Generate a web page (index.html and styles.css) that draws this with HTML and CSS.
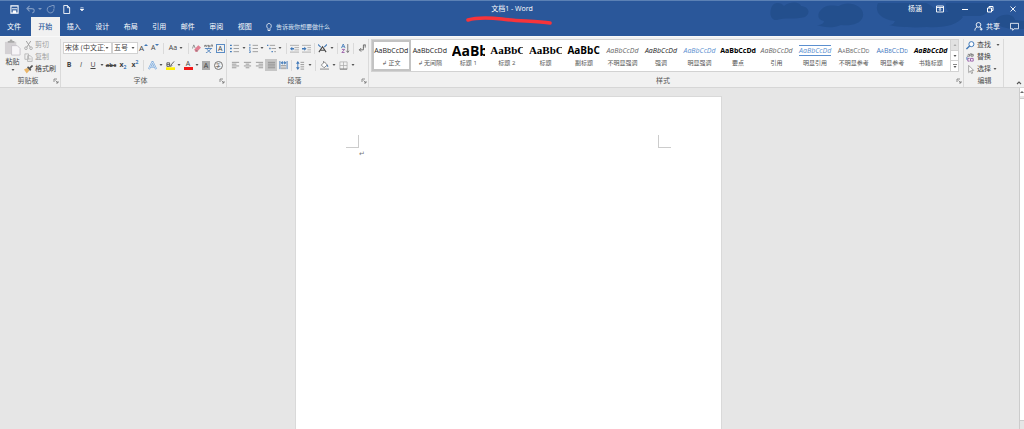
FILE: index.html
```html
<!DOCTYPE html>
<html lang="zh-CN">
<head>
<meta charset="utf-8">
<title>文档1 - Word</title>
<link rel="stylesheet" href="styles.css">
</head>
<body>
<svg class="defs" aria-hidden="true">
  <symbol id="caret" viewBox="0 0 4 4"><path d="M.5 1h3L2 3z" fill="#555"/></symbol>
  <symbol id="launch" viewBox="0 0 6 6"><path d="M1 4V1h3M2.500 2.500 5 5M5 3v2H3" fill="none" stroke="#777" stroke-width=".8"/></symbol>
  <symbol id="list" viewBox="0 0 10 10"><path d="M0 1.500h2M0 5h2M0 8.500h2" stroke="#3f78b8" stroke-width="1.600"/><path d="M4 1.500h6M4 5h6M4 8.500h6" stroke="#999"/></symbol>
  <symbol id="numlist" viewBox="0 0 10 10"><path d="M1 0v2.500M0 4h1.500L.5 6h1M0 7.500h1.500v2H0" stroke="#3f78b8" stroke-width=".8" fill="none"/><path d="M4 1.500h6M4 5h6M4 8.500h6" stroke="#999"/></symbol>
  <symbol id="multilist" viewBox="0 0 10 10"><path d="M0 1.500h1.500M2.500 5H4M5 8.500h1.500" stroke="#3f78b8" stroke-width="1.600"/><path d="M3 1.500h6M5 5h5M8 8.500h2" stroke="#999"/></symbol>
  <symbol id="outdent" viewBox="0 0 10 10"><path d="M0 1.500h10M5 4h5M5 6.500h5M0 9h10" stroke="#999" stroke-width=".8"/><path d="M0 5.200 2.500 3v1.500H4.500v1.500h-2v1.500z" fill="#3f78b8"/></symbol>
  <symbol id="indent" viewBox="0 0 10 10"><path d="M0 1.500h10M6 4h4M6 6.500h4M0 9h10" stroke="#999" stroke-width=".8"/><path d="M5 5.200 2.500 3v1.500H0v1.500h2.500v1.500z" fill="#3f78b8"/></symbol>
  <symbol id="left" viewBox="0 0 10 10"><path d="M1 1.500h8M1 3.500h5M1 5.500h8M1 7.500h5" stroke="#888" stroke-width=".9"/></symbol>
  <symbol id="center" viewBox="0 0 10 10"><path d="M1 1.500h8M3 3.500h4M1 5.500h8M3 7.500h4" stroke="#888" stroke-width=".9"/></symbol>
  <symbol id="right" viewBox="0 0 10 10"><path d="M1 1.500h8M4 3.500h5M1 5.500h8M4 7.500h5" stroke="#888" stroke-width=".9"/></symbol>
  <symbol id="justify" viewBox="0 0 10 10"><path d="M1 1.500h8M1 3.500h8M1 5.500h8M1 7.500h8" stroke="#888" stroke-width=".9"/></symbol>
  <symbol id="distribute" viewBox="0 0 10 10"><path d="M1 0v9M9 0v9" stroke="#3f78b8"/><path d="M2 2 4 .5v3zM8 2 6 .5v3zM3 2h4" fill="#3f78b8" stroke="#3f78b8" stroke-width=".6"/><path d="M2 5h6M2 6.800h6M2 8.500h6" stroke="#888" stroke-width=".8"/></symbol>
  <symbol id="spacing" viewBox="0 0 10 10"><path d="M2 1v8" stroke="#3f78b8"/><path d="M2 0 4 3H0zM2 10 4 7H0z" fill="#3f78b8"/><path d="M5 1.500h4M5 4h4M5 6.500h4M5 9h4" stroke="#888" stroke-width=".9"/></symbol>
  <symbol id="bucket" viewBox="0 0 10 10"><path d="M1.500 4.500 5 1l3 3.500-3.500 3zM4 2V0" fill="#fff" stroke="#666" stroke-width=".8"/><path d="M8 4c1 1 1.500 2 1 3L7.500 5.500z" fill="#3f78b8"/><path d="M0 9h10" stroke="#aaa" stroke-width="1.600"/></symbol>
  <symbol id="border" viewBox="0 0 10 10"><path d="M1 1h8v8H1zM5 1v8M1 5h8" fill="none" stroke="#aaa" stroke-width=".8"/><path d="M1 9h8" stroke="#777"/></symbol>
  <symbol id="asian" viewBox="0 0 10 10"><path d="M0 .5 3 3.500M10 .5 7 3.500" fill="none" stroke="#3f78b8" stroke-width="1.200"/><path d="m1 9 4-6 4 6M3 7h4" fill="none" stroke="#444" stroke-width="1.200"/></symbol>
  <symbol id="sort" viewBox="0 0 10 10"><path d="M.5 4.500 2.500 0l2 4.500M1.300 3h2.500" fill="none" stroke="#3f78b8" stroke-width=".9"/><path d="M1 6h3L1 9.500h3" fill="none" stroke="#8d4a9e" stroke-width=".9"/><path d="M7.500 0v9M6 7.500 7.500 9.500 9 7.500" fill="none" stroke="#666" stroke-width=".9"/></symbol>
  <symbol id="marks" viewBox="0 0 10 10"><path d="M8.500 1H6v3.500M8 1v3M1.500 6.500H6V4M3.500 4.500l-2 2 2 2" fill="none" stroke="#555" stroke-width=".9"/></symbol>
  <symbol id="eraser" viewBox="0 0 10 10"><path d="m2.500 6 4.500-4.500 3 2.500-4.500 5H4z" fill="#e27f92"/><path d="M.5 5 2 1l1.500 3.500M4 7l2.500 1" fill="none" stroke="#777" stroke-width=".8"/></symbol>
  <symbol id="phonetic" viewBox="0 0 10 10"><path d="M0 1l1 2 1-2 1 2 1-2M5 2h2M5 1v2h2M8 3V1h1.500v2" fill="none" stroke="#555" stroke-width=".7"/><path d="M1 5h8M5 4v1M3 5c1 2 3 4 5 5M7.500 5C7 7 4 9 2 10" fill="none" stroke="#3f78b8" stroke-width=".9"/></symbol>
  <symbol id="marker" viewBox="0 0 10 10"><path d="M0 7h10v3H0z" fill="#ffef00"/><path d="M1 2h3v4H1zM1 4h3M5 5l4-4.500M4.500 6 7 5" fill="none" stroke="#555" stroke-width="1"/></symbol>
  <symbol id="paste" viewBox="0 0 18 18"><path d="M1 3h12v13H1z" fill="#d4d1d4"/><path d="M4 4V2h2c0-2 3-2 3 0h2v2z" fill="#aaa"/><path d="M8 7h6l3 3v7H8z" fill="#f7f5f8" stroke="#c8c3ca"/></symbol>
  <symbol id="cut" viewBox="0 0 10 10"><path d="M2.500 0 7 7M7.500 0 3 7" stroke="#999"/><g fill="none" stroke="#aaa"><circle cx="2.200" cy="8" r="1.500"/><circle cx="7.800" cy="8" r="1.500"/></g></symbol>
  <symbol id="copy" viewBox="0 0 10 10"><path d="M1 1h4v6H1zM4 3h3l2 2v4.500H4z" fill="#f1f1f1" stroke="#b5b5b5"/><path d="M5.500 6h2M5.500 7.500h2" stroke="#b5b5b5" stroke-width=".6"/></symbol>
  <symbol id="brush" viewBox="0 0 10 10"><path d="m0 5 4-2 2 3-3 3.500z" fill="#eab66a"/><path d="m4 2 3.500 4" stroke="#555" stroke-width="1.800"/><path d="M6 4 9.500.5" stroke="#555" stroke-width="1.800"/></symbol>
  <symbol id="find" viewBox="0 0 10 10"><circle cx="6" cy="3.500" r="2.800" fill="#fff" stroke="#3f78b8" stroke-width="1.100"/><path d="M4 5.500.5 9" stroke="#3f78b8" stroke-width="1.600"/></symbol>
  <symbol id="replace" viewBox="0 0 10 10"><path d="M1 3.500h3V1.500H2M5.500 0v3.500H8V1.500H5.500" fill="none" stroke="#666" stroke-width=".9"/><path d="M5 6v3h3V6H5M4 6H2v3h2" fill="none" stroke="#8d4a9e" stroke-width=".9"/><path d="M1 4.500v3" stroke="#3f78b8"/></symbol>
  <symbol id="pointer" viewBox="0 0 10 10"><path d="M3 .5v8l2-2 1.200 3 1.200-.5L6.200 6H8.500z" fill="#fff" stroke="#777" stroke-width=".7"/></symbol>
</svg>

<header class="top">
  <svg class="clouds" viewBox="0 0 254 28" aria-hidden="true"><g fill="#1f4a85" opacity=".6">
    <path d="M1 8C2 1 10 0 14 5c7-5 16-4 17 0 8 1 10 7 4 11-10 3-22 0-28 3C2 20-1 14 1 8z"/>
    <path d="M50 10c6-8 15-5 19-5 8-6 26-1 24 10-2 9-14 10-22 9-9 4-19 2-24 0 5 0 7-2 7-4-6-1-7-6-4-10z"/>
    <path d="M108 2h48c8 3 8 8 18 9 7 0 15 1 19 5-6 8-18 11-36 10-14 1-30 0-38-2 4 0 5-2 6-4-18-2-20-12-17-18zM176 2h43c3 6-2 12-9 13h-24c-8-2-11-8-10-13zM227 17c6-5 17-4 18 2l9 1v8c-9 1-20-1-24-3-5-1-6-5-3-8z"/>
  </g></svg>
  <div class="titlebar">
    <div class="quick">
      <button aria-label="保存"><svg class="i9" viewBox="0 0 10 10"><path d="M1 1h8v8H1z" fill="none" stroke="#fff" stroke-width="1.200"/><path d="M2 4.200h6" stroke="#fff"/><path d="M3 6h4v3H3z" fill="#fff"/></svg></button>
      <button class="dim" aria-label="撤消"><svg class="i9" viewBox="0 0 10 10"><path d="M4 1 1 4l3 3M1 4h5c4 0 4 4 1 5" fill="none" stroke="#fff" stroke-width="1.200"/></svg></button>
      <button class="dim narrow" aria-label="撤消选项"><svg class="i4" viewBox="0 0 4 4"><path d="M0 1h4L2 3z" fill="#fff"/></svg></button>
      <button class="dim" aria-label="重复"><svg class="i9" viewBox="0 0 10 10"><path d="M6 1.500a3.700 3.700 0 1 0 2.700 3M6 .5h3V4" fill="none" stroke="#fff" stroke-width="1.100"/></svg></button>
      <button aria-label="新建"><svg class="i9" viewBox="0 0 10 10"><path d="M2 .5h4L8.500 3v6.500H2zM6 .5V3h2.500" fill="none" stroke="#fff"/></svg></button>
      <button aria-label="自定义快速访问工具栏"><svg class="i4" viewBox="0 0 4 4"><path d="M.5.5h3M0 2h4L2 4z" fill="#fff" stroke="#fff" stroke-width=".5"/></svg></button>
    </div>
    <h1 class="title">文档1 - Word
      <svg class="scribble" viewBox="0 0 90 10" aria-hidden="true"><path d="M3 4c10-3 24-2 34-1 14 2 35 2 48 4" fill="none" stroke="#f8343a" stroke-width="3.600" stroke-linecap="round"/></svg>
    </h1>
    <div class="window">
      <button class="user">杨涵</button>
      <button aria-label="功能区显示选项"><svg class="i8" viewBox="0 0 8 8"><path d="M.5 1h7v6h-7zM.5 2.500h7M4 6V3.500M3 4.500l1-1 1 1" fill="none" stroke="#fff" stroke-width=".9"/></svg></button>
      <button aria-label="最小化"><svg class="i8" viewBox="0 0 8 8"><path d="M1 4.500h6" stroke="#fff"/></svg></button>
      <button aria-label="还原"><svg class="i8" viewBox="0 0 8 8"><path d="M1.500 3h4v4h-4zM3 3V1.500h4v4H5.500" fill="none" stroke="#fff"/></svg></button>
      <button aria-label="关闭"><svg class="i8" viewBox="0 0 8 8"><path d="m1.500 1.500 5 5M6.500 1.500l-5 5" stroke="#fff" stroke-width=".9"/></svg></button>
    </div>
  </div>
  <div class="tabbar">
    <button class="file">文件</button>
    <nav class="tabs">
      <button class="active">开始</button><button>插入</button><button>设计</button><button>布局</button><button>引用</button><button>邮件</button><button>审阅</button><button>视图</button>
    </nav>
    <label class="tell"><svg class="i8" viewBox="0 0 8 8"><path d="M3 5.500C1 4 1.500.5 4 .5S7 4 5 5.500V7.500H3z" fill="none" stroke="#fff" stroke-width=".8"/></svg>
      <input type="text" aria-label="操作说明搜索" placeholder="告诉我你想要做什么"></label>
    <button class="share"><svg class="i9" viewBox="0 0 10 10"><circle cx="5" cy="3.200" r="2.600" fill="none" stroke="#fff"/><path d="M1 9.500c0-2 1-3.500 2.500-4M6.500 5.500 8 7M6.500 8h3M8 6.500v3" fill="none" stroke="#fff"/></svg>共享</button>
    <button class="comment" aria-label="批注"><svg class="i9" viewBox="0 0 10 10"><path d="M.5 1.500h9v6h-5L3 9.300V7.500H.5z" fill="none" stroke="#fff" stroke-width=".9"/></svg></button>
  </div>
</header>

<main class="ribbon">
  <section class="group clipboard">
    <div class="body">
      <button class="paste"><svg class="i18"><use href="#paste"/></svg>粘贴<svg class="i4"><use href="#caret"/></svg></button>
      <div class="stack">
        <button class="faint"><svg class="i9"><use href="#cut"/></svg>剪切</button>
        <button class="faint"><svg class="i9"><use href="#copy"/></svg>复制</button>
        <button><svg class="i9"><use href="#brush"/></svg>格式刷</button>
      </div>
    </div>
    <footer><span>剪贴板</span><button aria-label="剪贴板选项"><svg class="i6"><use href="#launch"/></svg></button></footer>
  </section>

  <section class="group font">
    <div class="body rows">
      <div class="row">
        <label class="combo name"><select aria-label="字体"><option>宋体 (中文正文)</option></select><svg class="i4"><use href="#caret"/></svg></label>
        <label class="combo size"><select aria-label="字号"><option>五号</option></select><svg class="i4"><use href="#caret"/></svg></label>
        <button class="tool big" aria-label="增大字号">A<svg class="i4 raise" viewBox="0 0 4 4"><path d="M0 3h4L2 1z" fill="#3f78b8"/></svg></button>
        <button class="tool" aria-label="减小字号">A<svg class="i4 raise" viewBox="0 0 4 4"><path d="M0 1h4L2 3z" fill="#3f78b8"/></svg></button>
        <i class="sep"></i>
        <button class="tool case">Aa<svg class="i4"><use href="#caret"/></svg></button>
        <i class="sep"></i>
        <button class="tool" aria-label="清除格式"><svg class="i9"><use href="#eraser"/></svg></button>
        <button class="tool" aria-label="拼音指南"><svg class="i9"><use href="#phonetic"/></svg></button>
        <button class="tool"><span class="boxed">A</span></button>
      </div>
      <div class="row">
        <button class="tool"><b>B</b></button>
        <button class="tool"><em>I</em></button>
        <button class="tool"><u>U</u></button>
        <button class="drop" aria-label="下划线选项"><svg class="i4"><use href="#caret"/></svg></button>
        <button class="tool strike"><s>abc</s></button>
        <button class="tool"><b>x<sub>2</sub></b></button>
        <button class="tool"><b>x<sup>2</sup></b></button>
        <i class="sep"></i>
        <button class="tool" aria-label="文本效果"><svg class="i9" viewBox="0 0 10 10"><path d="m1 9 4-8 4 8M3 6.500h4" fill="none" stroke="#6da0d8" stroke-width="2.200"/><path d="m1 9 4-8 4 8M3 6.500h4" fill="none" stroke="#fff" stroke-width=".8"/></svg></button>
        <button class="drop" aria-label="文本效果选项"><svg class="i4"><use href="#caret"/></svg></button>
        <button class="tool" aria-label="突出显示"><svg class="i9"><use href="#marker"/></svg></button>
        <button class="drop" aria-label="突出显示选项"><svg class="i4"><use href="#caret"/></svg></button>
        <button class="tool"><span class="red">A</span></button>
        <button class="drop" aria-label="字体颜色选项"><svg class="i4"><use href="#caret"/></svg></button>
        <button class="tool"><span class="shaded">A</span></button>
        <button class="tool"><span class="ring">字</span></button>
      </div>
    </div>
    <footer><span>字体</span><button aria-label="字体选项"><svg class="i6"><use href="#launch"/></svg></button></footer>
  </section>

  <section class="group para">
    <div class="body rows">
      <div class="row">
        <button class="tool" aria-label="项目符号"><svg class="i9"><use href="#list"/></svg></button>
        <button class="drop" aria-label="项目符号选项"><svg class="i4"><use href="#caret"/></svg></button>
        <button class="tool" aria-label="编号"><svg class="i9"><use href="#numlist"/></svg></button>
        <button class="drop" aria-label="编号选项"><svg class="i4"><use href="#caret"/></svg></button>
        <button class="tool" aria-label="多级列表"><svg class="i9"><use href="#multilist"/></svg></button>
        <button class="drop" aria-label="多级列表选项"><svg class="i4"><use href="#caret"/></svg></button>
        <i class="sep"></i>
        <button class="tool" aria-label="减少缩进量"><svg class="i9"><use href="#outdent"/></svg></button>
        <button class="tool" aria-label="增加缩进量"><svg class="i9"><use href="#indent"/></svg></button>
        <i class="sep"></i>
        <button class="tool" aria-label="中文版式"><svg class="i9"><use href="#asian"/></svg></button>
        <button class="drop" aria-label="中文版式选项"><svg class="i4"><use href="#caret"/></svg></button>
        <i class="sep"></i>
        <button class="tool" aria-label="排序"><svg class="i9"><use href="#sort"/></svg></button>
        <i class="sep"></i>
        <button class="tool" aria-label="显示编辑标记"><svg class="i9"><use href="#marks"/></svg></button>
      </div>
      <div class="row">
        <button class="tool" aria-label="左对齐"><svg class="i9"><use href="#left"/></svg></button>
        <button class="tool" aria-label="居中"><svg class="i9"><use href="#center"/></svg></button>
        <button class="tool" aria-label="右对齐"><svg class="i9"><use href="#right"/></svg></button>
        <button class="tool on" aria-label="两端对齐"><svg class="i9"><use href="#justify"/></svg></button>
        <button class="tool" aria-label="分散对齐"><svg class="i9"><use href="#distribute"/></svg></button>
        <i class="sep"></i>
        <button class="tool" aria-label="行距"><svg class="i9"><use href="#spacing"/></svg></button>
        <button class="drop" aria-label="行距选项"><svg class="i4"><use href="#caret"/></svg></button>
        <i class="sep"></i>
        <button class="tool" aria-label="底纹"><svg class="i9"><use href="#bucket"/></svg></button>
        <button class="drop" aria-label="底纹选项"><svg class="i4"><use href="#caret"/></svg></button>
        <button class="tool" aria-label="边框"><svg class="i9"><use href="#border"/></svg></button>
        <button class="drop" aria-label="边框选项"><svg class="i4"><use href="#caret"/></svg></button>
      </div>
    </div>
    <footer><span>段落</span><button aria-label="段落选项"><svg class="i6"><use href="#launch"/></svg></button></footer>
  </section>

  <section class="group styles">
    <div class="body">
      <div class="gallery">
        <button class="chosen"><span class="sample">AaBbCcDd</span><span class="label">↲ 正文</span></button>
        <button><span class="sample">AaBbCcDd</span><span class="label">↲ 无间隔</span></button>
        <button><span class="sample h1">AaBb</span><span class="label">标题 1</span></button>
        <button><span class="sample h2">AaBbC</span><span class="label">标题 2</span></button>
        <button><span class="sample h2">AaBbC</span><span class="label">标题</span></button>
        <button><span class="sample h3">AaBbC</span><span class="label">副标题</span></button>
        <button><span class="sample it gray">AaBbCcDd</span><span class="label">不明显强调</span></button>
        <button><span class="sample it">AaBbCcDd</span><span class="label">强调</span></button>
        <button><span class="sample it blue">AaBbCcDd</span><span class="label">明显强调</span></button>
        <button><span class="sample bold">AaBbCcDd</span><span class="label">要点</span></button>
        <button><span class="sample it gray">AaBbCcDd</span><span class="label">引用</span></button>
        <button><span class="sample it blue ruled">AaBbCcDd</span><span class="label">明显引用</span></button>
        <button><span class="sample caps gray">AaBbCcDd</span><span class="label">不明显参考</span></button>
        <button><span class="sample caps strong">AaBbCcDd</span><span class="label">明显参考</span></button>
        <button><span class="sample it bold">AaBbCcDd</span><span class="label">书籍标题</span></button>
      </div>
      <div class="scroller">
        <button class="off" aria-label="上一行"><svg class="i4" viewBox="0 0 4 4"><path d="M.5 3h3L2 1z" fill="#aaa"/></svg></button>
        <button aria-label="下一行"><svg class="i4"><use href="#caret"/></svg></button>
        <button aria-label="其他样式"><svg class="i4" viewBox="0 0 4 4"><path d="M0 .5h4" stroke="#555" stroke-width=".7"/><path d="M.5 2h3L2 4z" fill="#555"/></svg></button>
      </div>
    </div>
    <footer><span>样式</span><button aria-label="样式选项"><svg class="i6"><use href="#launch"/></svg></button></footer>
  </section>

  <section class="group edit">
    <div class="body stack">
      <button><svg class="i9"><use href="#find"/></svg>查找<svg class="i4 far"><use href="#caret"/></svg></button>
      <button><svg class="i9"><use href="#replace"/></svg>替换</button>
      <button><svg class="i9"><use href="#pointer"/></svg>选择<svg class="i4"><use href="#caret"/></svg></button>
    </div>
    <footer><span>编辑</span></footer>
  </section>
  <button class="collapse" aria-label="折叠功能区"><svg class="i6" viewBox="0 0 6 6"><path d="m1 4 2-2 2 2" fill="none" stroke="#555" stroke-width="1.100"/></svg></button>
</main>

<div class="workspace">
  <div class="canvas">
    <article class="page">
      <div class="margins"><i class="mark start"></i><i class="mark end"></i></div>
      <p>↵</p>
    </article>
  </div>
  <div class="scrollbar"><button aria-label="向上滚动"><svg class="i4" viewBox="0 0 4 4"><path d="M0 3h4L2 1z" fill="#666"/></svg></button><div class="thumb"></div></div>
</div>
</body>
</html>
```
FILE: styles.css
```css
* { box-sizing: border-box; }
body {
  margin: 0;
  min-height: 100vh;
  display: flex;
  flex-direction: column;
  font: 7px/10px "Open Sans", "Noto Sans CJK SC", sans-serif;
  color: #444;
  background: #e6e6e6;
}
button, input, select {
  font: inherit;
  color: inherit;
  background: none;
  border: 0;
  padding: 0;
  margin: 0;
}
button { display: flex; align-items: center; justify-content: center; white-space: nowrap; }
svg { display: block; flex: none; }
.defs { position: absolute; width: 0; height: 0; }
.i4 { width: 4px; height: 4px; }
.i6 { width: 6px; height: 6px; }
.i8 { width: 8px; height: 8px; }
.i9 { width: 9px; height: 9px; }
.i18 { width: 17px; height: 17px; }

/* Title bar and tabs */
.top { position: relative; background: #2a579a; color: #fff; border-top: 1px solid #5b81b5; }
.clouds { position: absolute; top: 0; right: 0; width: 254px; height: 28px; }
.titlebar { position: relative; display: grid; grid-template-columns: 1fr auto 1fr; height: 16px; align-items: center; }
.quick { display: flex; align-items: center; padding-left: 6px; }
.quick button { width: 16px; }
.quick .narrow { width: 4px; }
.dim { opacity: .4; }
.title { position: relative; margin: 0; font-size: 7px; font-weight: 400; line-height: 10px; }
.scribble { position: absolute; left: -26px; top: 12px; width: 90px; height: 10px; }
.window { display: flex; justify-content: flex-end; align-items: center; }
.window button { width: 25px; }
.window .user { width: 24px; }
.window button:last-child { width: 22px; }
.tabbar { position: relative; display: flex; height: 19px; align-items: stretch; }
.file { width: 31px; padding-right: 3px; }
.tabs { display: grid; grid-template-columns: repeat(8, 1fr); width: 228px; }
.tabs .active { background: #f1f1f1; color: #2a579a; font-weight: 500; }
.tell { display: flex; align-items: center; gap: 3px; padding-left: 6px; flex: 1; font-size: 6px; }
.tell input { flex: 1; min-width: 0; }
.tell input::placeholder { color: #dbe4f0; opacity: 1; }
.share { gap: 3px; margin-right: 10px; }
.comment { margin-right: 5px; }

/* Ribbon */
.ribbon { display: flex; height: 52px; padding-top: 2px; background: #f1f1f1; border-top: 1px solid #f8f8f8; border-bottom: 1px solid #d6d6d6; }
.group { display: flex; flex-direction: column; flex: none; border-right: 1px solid #dadada; }
.group .body { height: 37px; display: flex; }
.group footer { display: flex; align-items: center; height: 12px; color: #555; }
.group footer span { flex: 1; text-align: center; }
.group footer button { width: 8px; }
.clipboard { width: 61px; padding-left: 4px; }
.font { width: 166px; padding-left: 2px; }
.para { width: 142px; padding-left: 2px; }
.styles { flex: 1; min-width: 0; padding-left: 2px; }
.edit { width: 40px; padding-left: 2px; }
.paste { flex-direction: column; width: 17px; justify-content: flex-start; gap: 1px; }
.stack { display: flex; flex-direction: column; }
.clipboard .stack { padding-left: 3px; }
.stack button { height: 12px; gap: 2px; justify-content: flex-start; }
.stack .far { margin-left: 3px; }
.faint { color: #a0a0a0; }
.group .rows { flex-direction: column; gap: 1px; padding-top: 1px; }
.row { display: flex; align-items: center; height: 16px; }
.tool { width: 12px; height: 12px; }
.drop { width: 6px; height: 12px; }
.para .drop { width: 7px; }
.sep { width: 1px; height: 11px; margin: 0 2px; background: #dadada; }
.on { background: #c6c6c6; }
.raise { align-self: flex-start; margin-top: 1px; }
.big { font-size: 8px; }
.case { width: 20px; gap: 2px; }
.combo { display: flex; align-items: center; height: 12px; border: 1px solid #d2d2d2; background: #fff; padding-right: 2px; }
.combo select { appearance: none; flex: 1; min-width: 0; padding-left: 1px; text-overflow: clip; }
.combo.name { width: 49px; }
.combo.size { width: 26px; }
.strike { font-size: 6px; font-weight: 700; }
sub, sup { font-size: 5px; line-height: 1px; color: #3f78b8; }
.boxed { width: 9px; height: 9px; line-height: 8px; border: 1px solid #5b8cc4; font-weight: 500; }
.red { width: 9px; line-height: 7px; border-bottom: 3px solid #f01818; }
.shaded { width: 8px; line-height: 9px; background: #aaa; }
.ring { width: 9px; height: 9px; line-height: 7px; font-size: 5px; border: 1px solid #777; border-radius: 50%; }

/* Style gallery */
.gallery { flex: 1; min-width: 0; display: grid; grid-template-columns: repeat(15, minmax(0, 1fr)); height: 33px; background: #fff; border: 1px solid #d2d2d2; border-right: 0; }
.gallery button { flex-direction: column; min-width: 0; justify-content: flex-start; padding-top: 3px; }
.gallery .chosen { padding-top: 1px; border: 2px solid #c3c3c3; }
.sample { height: 15px; line-height: 15px; color: #222; }
.label { line-height: 11px; font-size: 6px; color: #555; }
.h1, .h2, .h3 { width: 33px; overflow: hidden; text-align: left; font-weight: 700; color: #000; }
.h1 { font-size: 14px; }
.h2 { font-family: "Liberation Serif", serif; font-size: 11px; }
.h3 { font-size: 10px; }
.it { font-style: italic; }
.gray { color: #666; }
.blue { color: #5b8fcf; }
.bold { font-weight: 700; color: #000; }
.ruled { height: 11px; line-height: 9px; margin: 2px 0; border-top: 1px solid #5b8fcf; border-bottom: 1px solid #5b8fcf; }
.caps { font-variant: small-caps; }
.strong { color: #3f78c0; font-weight: 500; }
.scroller { display: flex; flex-direction: column; width: 9px; height: 33px; margin-right: 4px; border: 1px solid #d2d2d2; }
.scroller button { flex: 1; background: #fff; }
.scroller button + button { border-top: 1px solid #d2d2d2; }
.scroller .off { background: #e1e1e1; }
.collapse { align-self: flex-end; justify-content: flex-end; width: 20px; padding: 0 2px 1px 0; }

/* Document */
.workspace { flex: 1; display: flex; }
.canvas { flex: 1; display: flex; justify-content: center; padding: 8px 2px 0 0; }
.page { width: 42%; background: #fff; border: 1px solid #d9d9d9; border-bottom: 0; padding: 38px 50px 0; }
.margins { display: flex; justify-content: space-between; }
.mark { width: 13px; height: 13px; border-bottom: 1px solid #ccc; }
.start { border-right: 1px solid #ccc; }
.end { border-left: 1px solid #ccc; }
.page p { margin: 0 0 0 13px; line-height: 12px; color: #777; }
.scrollbar { width: 5px; display: flex; flex-direction: column; padding-bottom: 8px; border-left: 1px solid #ccc; }
.scrollbar button { height: 8px; background: #fff; }
.thumb { flex: 1; margin-top: 2px; background: #fff; border-top: 1px solid #ccc; border-bottom: 1px solid #ccc; }
```
